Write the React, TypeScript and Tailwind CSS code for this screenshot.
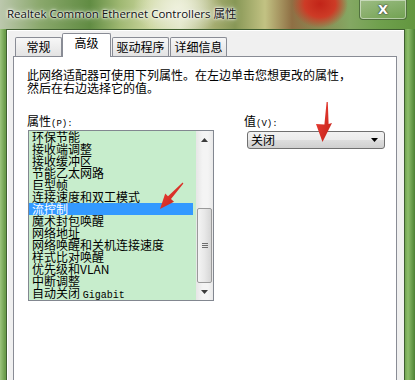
const items = [
  "环保节能",
  "接收端调整",
  "接收缓冲区",
  "节能乙太网路",
  "巨型帧",
  "连接速度和双工模式",
  "流控制",
  "魔术封包唤醒",
  "网络地址",
  "网络唤醒和关机连接速度",
  "样式比对唤醒",
  "优先级和VLAN",
  "中断调整",
];

function TitleBar() {
  return (
    <div className="flex h-[29px] shrink-0 items-start bg-[radial-gradient(ellipse_28px_24px_at_320px_4px,#c22418_0%,#cd3b26_55%,transparent_100%),radial-gradient(ellipse_45px_28px_at_178px_8px,#eef0dc_0%,transparent_100%),linear-gradient(90deg,#bcc8ad_0px,#8aa86c_40px,#618c43_90px,#9fb872_120px,#cbd69e_150px,#dfe5c6_180px,#a3ab6e_215px,#879756_235px,#c2c283_265px,#8f6f44_292px,#84a863_350px,#6fa04d_380px,#62963f_415px)]">
      <div className="pl-[7px] pt-[6px] font-['Open_Sans','Noto_Sans_CJK_SC',sans-serif] text-[11.5px] leading-[15px] text-[#111] [text-shadow:0_0_6px_#fff,0_0_3px_#fff,0_0_2px_#fff]">
        Realtek Common Ethernet Controllers 属性
      </div>
      <div className="ml-auto mr-[8px] flex h-[20px] w-[48px] items-center justify-center rounded-b-[4px] border border-t-0 border-[#51703f] bg-[linear-gradient(180deg,rgba(255,255,255,0.25),rgba(255,255,255,0.08))] shadow-[inset_0_0_0_1px_rgba(255,255,255,0.45)]">
        <span className="font-['DejaVu_Sans',sans-serif] text-[13px] font-bold leading-none text-white [text-shadow:0_0_1px_#333,0_0_2px_#333]">
          X
        </span>
      </div>
    </div>
  );
}

function Tab({ label, active, w }: { label: string; active?: boolean; w: string }) {
  if (active) {
    return (
      <div
        className={`relative z-10 mb-[-1px] h-[24px] ${w} rounded-t-[2px] border border-b-0 border-[#898c95] bg-white pt-[2px] text-center leading-[14px]`}
      >
        {label}
      </div>
    );
  }
  return (
    <div
      className={`h-[19px] ${w} rounded-t-[2px] border border-b-0 border-[#898c95] bg-[linear-gradient(180deg,#f7f7f7,#e3e3e3)] pt-[2px] text-center leading-[14px]`}
    >
      {label}
    </div>
  );
}

function ScrollBar() {
  return (
    <div className="flex w-[17px] flex-col bg-[linear-gradient(90deg,#e6e6e6,#f4f4f4_40%,#f4f4f4_70%,#e9e9e9)]">
      <div className="flex h-[17px] items-center justify-center">
        <svg width="7" height="4" viewBox="0 0 7 4">
          <path d="M0 4 L3.5 0 L7 4 Z" fill="#3c3c3c" />
        </svg>
      </div>
      <div className="flex-1">
        <div className="mx-[1px] mt-[60px] flex h-[75px] items-center justify-center rounded-[2px] border border-[#9a9a9a] bg-[linear-gradient(90deg,#f4f4f4,#e8e8e8_50%,#d6d6d6)]">
          <div className="flex flex-col gap-[1px]">
            <div className="h-px w-[6px] bg-[#6d6d6d]" />
            <div className="h-px w-[6px] bg-[#6d6d6d]" />
            <div className="h-px w-[6px] bg-[#6d6d6d]" />
          </div>
        </div>
      </div>
      <div className="flex h-[17px] items-center justify-center">
        <svg width="7" height="4" viewBox="0 0 7 4">
          <path d="M0 0 L3.5 4 L7 0 Z" fill="#3c3c3c" />
        </svg>
      </div>
    </div>
  );
}

function ListBox() {
  return (
    <div className="ml-[1px] mt-[3px] flex h-[171px] w-[186px] border border-[#828790] bg-[#c7edcc]">
      <div className="flex-1 leading-[12px]">
        {items.map((it) => (
          <div
            key={it}
            className={`h-[12px] whitespace-nowrap pl-[3px] ${it === "流控制" ? "mr-[3px] bg-[#3399ff] text-white" : ""}`}
          >
            {it}
          </div>
        ))}
        <div className="h-[12px] whitespace-nowrap pl-[3px]">
          自动关闭 <span className="font-['Liberation_Mono',monospace] text-[10px]">Gigabit</span>
        </div>
      </div>
      <ScrollBar />
    </div>
  );
}

function Arrows() {
  return (
    <svg className="pointer-events-none absolute left-0 top-0" width="415" height="380">
      <defs>
        <linearGradient id="rg" x1="0" y1="0" x2="1" y2="1">
          <stop offset="0" stopColor="#f0443a" />
          <stop offset="1" stopColor="#c21f17" />
        </linearGradient>
      </defs>
      <polygon
        points="326.6,102 327.8,102 328.6,124 332,123 322.5,142 316,124 324.4,124.5"
        fill="url(#rg)"
      />
      <polygon
        points="182.6,182.6 183.4,183.4 171,199 174,201.8 160,209 165.2,193.4 168,196.2"
        fill="url(#rg)"
      />
    </svg>
  );
}

export default function App() {
  return (
    <div className="relative flex h-[380px] w-[415px] flex-col overflow-hidden bg-[linear-gradient(90deg,#9cc57c_0px,#6a9c4a_5px,#6a9c4a_404px,#8cbd6a_408px,#4c8233_415px)] font-['Noto_Sans_CJK_SC',sans-serif] text-[12px] text-black">
      <TitleBar />
      <div className="ml-[6px] mr-[10px] flex flex-1 flex-col border border-b-0 border-[#3f5f30] bg-[#f0f0f0] pl-[6px] pr-[7px] shadow-[inset_1px_1px_0_#fff]">
        <div className="flex h-[26px] shrink-0 items-end pl-[2px]">
          <Tab label="常规" w="w-[47px]" />
          <Tab label="高级" w="w-[49px]" active />
          <Tab label="驱动程序" w="w-[57px] ml-[1px]" />
          <Tab label="详细信息" w="w-[57px] ml-[1px]" />
        </div>
        <div className="flex-1 border border-b-0 border-[#898c95] bg-white pl-[13px] pt-[11px]">
          <p className="leading-[13px]">
            此网络适配器可使用下列属性。在左边单击您想更改的属性，
            <br />
            然后在右边选择它的值。
          </p>
          <div className="mt-[20px] flex">
            <div className="w-[217px]">
              <div className="h-[13px] leading-[13px]">
                属性<span className="font-['Liberation_Mono',monospace] text-[9px]">(P):</span>
              </div>
              <ListBox />
            </div>
            <div>
              <div className="h-[13px] leading-[13px]">
                值<span className="font-['Liberation_Mono',monospace] text-[9px]">(V):</span>
              </div>
              <div className="ml-[3px] mt-[4px] flex h-[18px] w-[138px] items-center rounded-[3px] border border-[#707070] bg-[linear-gradient(180deg,#f2f2f2,#ebebeb_50%,#dddddd_51%,#cfcfcf)] pl-[3px] pr-[6px]">
                <span className="leading-[14px]">关闭</span>
                <svg className="ml-auto" width="7" height="4" viewBox="0 0 7 4">
                  <path d="M0 0 L3.5 4 L7 0 Z" fill="#000" />
                </svg>
              </div>
            </div>
          </div>
        </div>
      </div>
      <Arrows />
    </div>
  );
}
